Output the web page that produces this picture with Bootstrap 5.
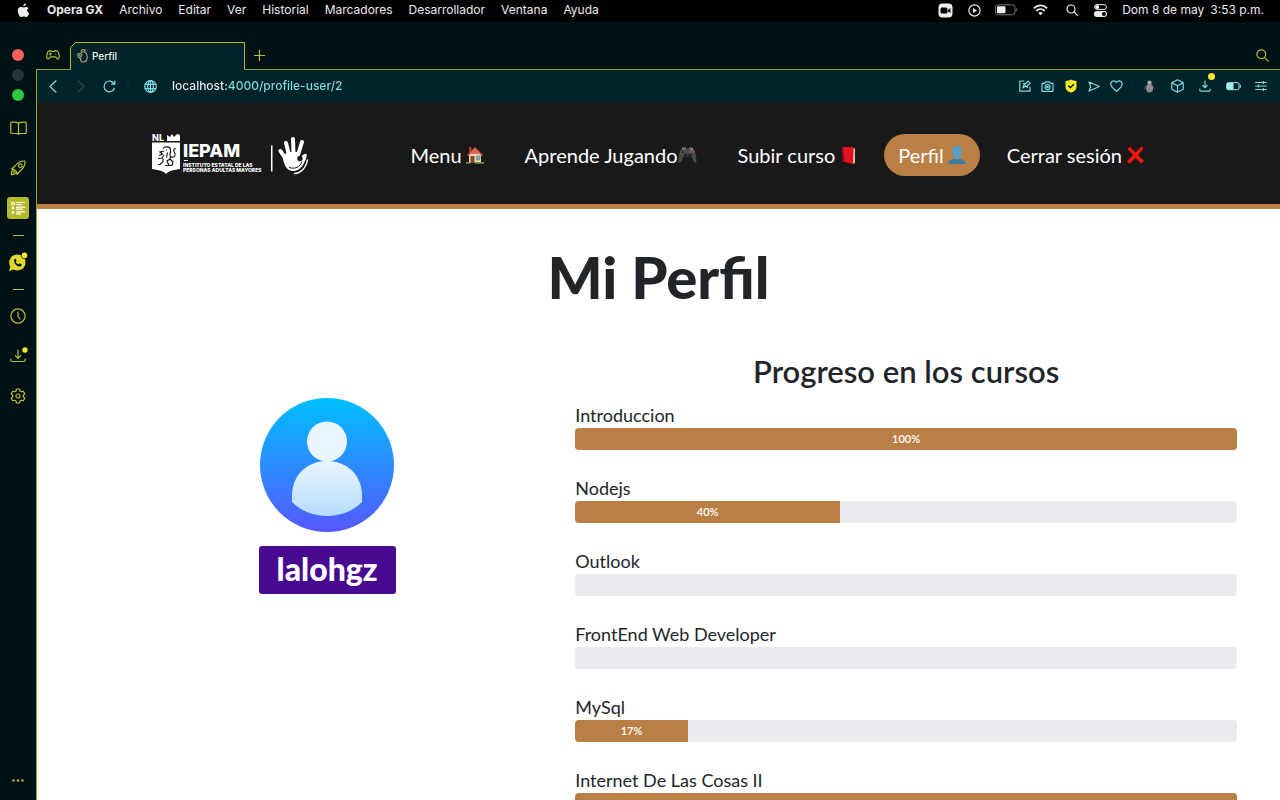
<!DOCTYPE html>
<html lang="es">
<head>
<meta charset="utf-8">
<meta name="viewport" content="width=device-width, initial-scale=1">
<title>Perfil</title>
<link href="https://cdn.jsdelivr.net/npm/bootstrap@5.3.0/dist/css/bootstrap.min.css" rel="stylesheet">
<style>
:root{--lime:#b9bf2f;--cyan:#7fdde2;--brand:#b97f45;--deep:#011114;--bar:#01232a}
body{font-family:Inter,"Liberation Sans",sans-serif;background:var(--deep)}
svg{display:block;flex:none}
button{background:none;border:0;padding:0;color:inherit;display:flex;align-items:center;justify-content:center}
.ico{fill:none;stroke:currentColor;stroke-width:1.2;stroke-linecap:round;stroke-linejoin:round}
.sysbar{background:#000;color:#ececec;height:22px;font-size:12px;line-height:20px;font-weight:500;padding:0 16px 2px 17px}
.sysbar nav{gap:16px;margin-left:17px}
.sysbar button{line-height:20px}
.sys-tools button{width:29px}
.sys-tools .wide{width:34px}
.clock{font-weight:400;gap:6px;padding-left:7px}
.rail{width:36px;color:var(--lime);padding-top:27px}
.lights{gap:8px;margin-bottom:7px}
.lights button{width:12px;height:12px;border-radius:50%}
.slot{height:40px;width:36px}
.slot-rule{height:14px}
.slot-rule i{width:11px;height:1px;background:var(--lime)}
.slot-on span{width:22px;height:22px;border-radius:3px;background:#b5b92c;color:#fff;display:flex;align-items:center;justify-content:center}
.tabstrip{height:48px;color:var(--lime)}
.edge{border-bottom:1px solid #98a02c}
.home-slot{width:34px;height:29px}
.page-tab{width:175px;height:28px;color:#f2f2f2;font-size:10px;font-weight:500;padding-left:7px;gap:4px}
.view{border-left:1px solid #98a02c}
.toolbar{height:32px;background:var(--bar);color:var(--cyan);padding:0 5px 0 2px}
.w28{width:28px}.w23{width:23px}.w34{width:34px}
.sep{width:10px;color:#1d4a50}.sep-s{width:7px}
.url{font-size:12px;line-height:20px;font-weight:500;border:0;padding:0 0 0 5px;outline:0;color:transparent;background:linear-gradient(90deg,#f4f4f4 60px,#83dfe3 60px);-webkit-background-clip:text;background-clip:text;-webkit-text-fill-color:transparent}
.dot{width:7px;height:7px;border-radius:50%;background:#f3ea2b;position:absolute}
.site{background:#fff;color:#212529;font-family:Lato,"Open Sans",sans-serif;overflow:hidden auto;scrollbar-width:none}
.site::-webkit-scrollbar{display:none}
.site-head{background:#191919;border-bottom:5px solid var(--brand)}
.site-inner{max-width:1013px;height:102px;padding:3px 6px 0 0}
.site-nav{gap:13px}
.site-nav a{color:#fff;font-size:20px;line-height:26px;padding:8px 14px;border-radius:21px;gap:4px;white-space:nowrap}
.site-nav a.on{background:var(--brand)}
.title{font-size:58px;line-height:70px;font-weight:900;margin:33px 0 0}
.panel{grid-template-columns:3fr 4fr;padding:40px 43px 0 42px}
.who{padding-top:46px}
.who svg{width:134px;height:134px}
.tag{background:#470a91;color:#fff;font-size:32px;line-height:34px;font-weight:900;padding:6px 18px 8px;border-radius:3px;margin-top:14px}
.sub-title{font-size:31px;line-height:38px;font-weight:600;margin:0 0 12px}
.course{margin-bottom:25px}
.course-name{font-size:18px;line-height:26px}
.course .progress{height:22px;border-radius:4px;background:#e9ebee;--bs-progress-bar-bg:#b97f45}
.course .progress-bar{font-size:11px;font-weight:600;line-height:22px}
</style>
</head>
<body class="vh-100 d-flex flex-column overflow-hidden">

<header class="sysbar d-flex align-items-center flex-shrink-0">
  <button aria-label="Apple"><svg width="13" height="15" viewBox="0 0 13 15" fill="#eee"><path d="M9 .3c.1 1.600-1.200 3-2.700 3C6.100 1.800 7.500.4 9 .3zM11.600 5.200c-2.200 1.400-1.800 4.200.6 5.200-.5 1.500-1.700 3.600-3 3.600-1 0-1.300-.6-2.500-.6s-1.600.6-2.500.6C2.500 14-.1 8.700 1.100 6c.8-1.800 2.400-2.300 3.700-1.900.8.200 1.300.5 1.900.5.600 0 1.200-.4 2.100-.6 1.100-.2 2.200.2 2.800 1.200z"/></svg></button>
  <nav class="d-flex flex-grow-1">
    <button class="fw-bold">Opera GX</button><button>Archivo</button><button>Editar</button><button>Ver</button><button>Historial</button><button>Marcadores</button><button>Desarrollador</button><button>Ventana</button><button>Ayuda</button>
  </nav>
  <div class="sys-tools d-flex align-items-center">
    <button aria-label="Zoom"><svg width="15" height="15" viewBox="0 0 15 15"><rect x=".5" y=".5" width="14" height="14" rx="4" fill="#eee"/><rect x="2.500" y="4.500" width="7" height="6" rx="1.500" fill="#000"/><path d="M10 7l2.500-2v5L10 8.500z" fill="#000"/></svg></button>
    <button aria-label="Reproducir"><svg class="ico" width="13" height="13" viewBox="0 0 13 13"><circle cx="6.500" cy="6.500" r="5.600"/><path d="M5 4l4 2.500L5 9z" fill="currentColor" stroke="none"/></svg></button>
    <button class="wide" aria-label="Batería"><svg width="23" height="12" viewBox="0 0 23 12"><rect x=".5" y=".8" width="19.500" height="10" rx="2.800" fill="none" stroke="#777"/><rect x="2" y="2.300" width="8.500" height="7" rx="1" fill="#eee"/><path d="M21.300 4v3.600c1.400-.6 1.400-3 0-3.600z" fill="#777"/></svg></button>
    <button class="wide" aria-label="Wi-Fi"><svg width="15" height="12" viewBox="0 0 15 12" fill="none" stroke="#eee" stroke-width="1.700"><path d="M.8 4.300c3.800-3.800 9.600-3.800 13.400 0M3.200 6.800c2.400-2.400 6.200-2.400 8.600 0"/><path d="M5.300 8.900c1.300-1.200 3.100-1.200 4.400 0L7.500 11.300z" fill="#eee" stroke="none"/></svg></button>
    <button aria-label="Buscar"><svg class="ico" width="12" height="12" viewBox="0 0 12 12" stroke-width="1.400"><circle cx="5" cy="5" r="4"/><path d="M8 8l3.400 3.400"/></svg></button>
    <button aria-label="Centro de control"><svg width="13" height="13" viewBox="0 0 13 13"><rect x=".6" y=".6" width="11.800" height="4.800" rx="2.400" fill="none" stroke="#eee"/><circle cx="3.200" cy="3" r="2" fill="#eee"/><rect y="7" width="13" height="6" rx="3" fill="#eee"/><circle cx="9.900" cy="10" r="2" fill="#000"/></svg></button>
    <div class="clock d-flex"><span>Dom 8 de may</span><span>3:53 p.m.</span></div>
  </div>
</header>

<div class="d-flex flex-grow-1 overflow-hidden">
  <aside class="rail d-flex flex-column align-items-center flex-shrink-0">
    <div class="lights d-flex flex-column">
      <button style="background:#f9605a" aria-label="Cerrar"></button><button style="background:#23343a" aria-label="Minimizar"></button><button style="background:#2bc840" aria-label="Ampliar"></button>
    </div>
    <button class="slot" aria-label="Lectura"><svg class="ico" width="17" height="14" viewBox="0 0 17 14"><path d="M8.500 2C7 .9 5 1 1.500 1.100q-.7 0-.7.700v10q0 .7.700.7h5.500l1.500.8 1.500-.8h5.500q.7 0 .7-.7v-10q0-.7-.7-.7C12 1 10 .9 8.500 2zM8.500 2v11"/></svg></button>
    <button class="slot" aria-label="Lanzador"><svg class="ico" width="16" height="16" viewBox="0 0 16 16"><path d="M15 1c-3.500-.2-7 1-10 5l-3.500 3 2.500.3L6.700 12l.3 2.500 3-3.500c4-3 5.200-6.500 5-10zM4 9.300C1.800 10.500 1.200 12.500 1.300 14.700c2.200.1 4.200-.5 5.400-2.700M3.500 12.500l1-1"/><circle cx="10.300" cy="5.700" r="1.800"/></svg></button>
    <button class="slot slot-on" aria-label="Noticias"><span><svg class="ico" width="16" height="16" viewBox="0 0 16 16"><circle cx="3" cy="3.500" r="1.500"/><circle cx="3" cy="8" r=".8"/><circle cx="3" cy="12.500" r=".8"/><path d="M6.500 2.500h8M6.500 4.500h5M6.500 7.200h8M6.500 9.200h6M6.500 11.800h8M6.500 13.800h4"/></svg></span></button>
    <div class="slot-rule d-flex align-items-center"><i></i></div>
    <button class="slot" aria-label="WhatsApp"><svg width="20" height="20" viewBox="0 0 20 20"><path d="M9.300 2.500a8 8 0 1 1-3.700 15L1 19l1.300-4.500A8 8 0 0 1 9.300 2.500z" fill="#dfd92c"/><path d="M6.300 7.200c.6-.8 1.200-.7 1.600 0l.6 1.400-.8 1.100c.7 1.400 1.500 2.100 2.800 2.700l1-1.100 1.900 1c.4.300.1 1.700-.9 2.100-3.500.9-7.500-4.100-6.200-7.200z" fill="#011114"/><circle cx="16.500" cy="3.400" r="3.400" fill="#011114"/><circle cx="16.500" cy="3.400" r="2.800" fill="#f3ea2b"/></svg></button>
    <div class="slot-rule d-flex align-items-center"><i></i></div>
    <button class="slot" aria-label="Historial"><svg class="ico" width="16" height="16" viewBox="0 0 16 16"><circle cx="8" cy="8" r="7.100"/><path d="M8 4v4.500l2 2.500"/></svg></button>
    <button class="slot" aria-label="Descargas"><svg class="ico" width="20" height="18" viewBox="0 0 20 18"><path d="M10 3v8M7.300 8.600L10 11.300l2.700-2.700M2.800 12v1.300q0 1.200 1.200 1.200h12q1.200 0 1.200-1.200V12"/><circle cx="17" cy="3" r="2.700" fill="#f3ea2b" stroke="none"/></svg></button>
    <button class="slot" aria-label="Ajustes"><svg class="ico" width="16" height="16" viewBox="0 0 16 16"><circle cx="8" cy="8" r="2"/><path d="M6.500 1h3l.5 2 1.300.8 2-.6 1.500 2.600L13.300 7.200v1.600l1.500 1.400-1.500 2.600-2-.6-1.300.8-.5 2h-3l-.5-2-1.300-.8-2 .6-1.500-2.600 1.500-1.400V7.200L1.200 5.800l1.500-2.600 2 .6L6 3z"/></svg></button>
    <button class="slot mt-auto" aria-label="Más"><svg width="12" height="3" viewBox="0 0 12 3" fill="currentColor"><circle cx="1.500" cy="1.500" r="1.200"/><circle cx="6" cy="1.500" r="1.200"/><circle cx="10.500" cy="1.500" r="1.200"/></svg></button>
  </aside>

  <div class="d-flex flex-column flex-grow-1 overflow-hidden">
    <div class="tabstrip d-flex align-items-end flex-shrink-0">
      <button class="home-slot edge" aria-label="GX Corner"><svg class="ico" width="14" height="10" viewBox="0 0 14 10"><path d="M3 .8h2l.8.7h2.400L9 .8h2c1.500.5 2.400 4 2.200 6.700-.3 1.900-1.700 1.900-2.700.4L9.500 6.800h-5L3.500 7.900C2.500 9.400 1.100 9.400.8 7.500.600 4.800 1.500 1.300 3 .8z"/><path d="M4.300 3v2M3.300 4h2M9.700 4h.1" /></svg></button>
      <div class="page-tab position-relative d-flex align-items-center">
        <svg class="position-absolute top-0 start-0" width="175" height="28" viewBox="0 0 175 28"><path d="M.5 28V5.500l5-5h169V28z" fill="#01232a"/><path d="M0 27.500h.5V5.500l5-5h169v27h.5" fill="none" stroke="#b5ba2c"/></svg>
        <svg class="ico position-relative" width="11" height="14" viewBox="0 0 11 14" style="color:#b29a76"><path d="M4 2.500l1-1.700h3l-.5 1.900M4.500 3.500c3.500-1.500 5.700.7 5.700 4.500 0 3.300-1.700 5-3.700 5-2.700 0-3.300-2-2.700-4M3.800 9C2 9.300.7 7.500.8 5c1.500-.8 3.500-.5 4 1 0 1.500-1.500 2-2.200.4"/></svg>
        <span class="position-relative">Perfil</span>
      </div>
      <div class="edge d-flex flex-grow-1 justify-content-between home-slot">
        <button class="w28" aria-label="Nueva pestaña"><svg class="ico" width="11" height="11" viewBox="0 0 11 11"><path d="M5.500.5v10M.5 5.500h10"/></svg></button>
        <button class="w28 me-1" aria-label="Buscar pestañas"><svg class="ico" width="13" height="13" viewBox="0 0 13 13"><circle cx="5.300" cy="5.300" r="4.400"/><path d="M8.600 8.600l3.600 3.600"/></svg></button>
      </div>
    </div>

    <div class="view d-flex flex-column flex-grow-1 overflow-hidden">
      <div class="toolbar d-flex align-items-center flex-shrink-0">
        <button class="w28" aria-label="Atrás"><svg class="ico" width="8" height="13" viewBox="0 0 8 13"><path d="M7 .8L1 6.500l6 5.700"/></svg></button>
        <button class="w28" aria-label="Adelante" style="color:#1d4a50"><svg class="ico" width="8" height="13" viewBox="0 0 8 13"><path d="M1 .8l6 5.700-6 5.700"/></svg></button>
        <button class="w28" aria-label="Recargar"><svg class="ico" width="13" height="13" viewBox="0 0 13 13"><path d="M11.500 8.300A5.400 5.400 0 1 1 11 3.500M11.800 1v3.200H8.600"/></svg></button>
        <svg class="sep" height="12" viewBox="0 0 10 12" fill="currentColor"><circle cx="5" cy="2" r=".8"/><circle cx="5" cy="6" r=".8"/><circle cx="5" cy="10" r=".8"/></svg>
        <button class="w34" aria-label="Información del sitio"><svg class="ico" width="13" height="13" viewBox="0 0 13 13"><circle cx="6.500" cy="6.500" r="5.800"/><ellipse cx="6.500" cy="6.500" rx="2.800" ry="5.800"/><path d="M6.500.7v11.600M1.300 4.300h10.400M1.300 8.700h10.400"/></svg></button>
        <input class="url flex-grow-1" type="text" aria-label="Dirección" value="localhost:4000/profile-user/2">
        <button class="w23" aria-label="Editar página"><svg class="ico" width="12" height="12" viewBox="0 0 12 12"><path d="M5 1H.8v10.200H11V7M4 8l.5-2.500M4.300 7.700L6.200 6M4.500 3.700l3.800 3.800.3-2 2.500-2.400-2-2L6.700 3.500z"/></svg></button>
        <button class="w23" aria-label="Captura"><svg class="ico" width="13" height="11" viewBox="0 0 13 11"><path d="M1 2.300h2.500L4.500.8h4l1 1.500H12v8H1z"/><circle cx="6.500" cy="6" r="2.500"/><circle cx="6.500" cy="6" r=".7"/></svg></button>
        <button class="w23" aria-label="Protección"><svg width="12" height="14" viewBox="0 0 12 14"><path d="M6 .5c2 1 3.500 1.300 5.500 1.500v6c0 3-2.500 4.500-5.500 5.700C3 12.500.5 11 .5 8V2C2.500 1.800 4 1.500 6 .5z" fill="#f3ea2b"/><path d="M3.300 6.500l2 2.200 3.500-3.500" fill="none" stroke="#01232a" stroke-width="1.500"/></svg></button>
        <button class="w23" aria-label="Enviar"><svg class="ico" width="12" height="11" viewBox="0 0 12 11"><path d="M1 1l10.300 4.500L1 10l1.700-4.500z"/></svg></button>
        <button class="w23" aria-label="Favorito"><svg class="ico" width="13" height="12" viewBox="0 0 13 12"><path d="M6.500 11.200C3.500 9 .8 7 .8 4 .8.800 4.800-.1 6.500 2.500 8.200-.1 12.200.8 12.200 4c0 3-2.700 5-5.700 7.200z"/></svg></button>
        <svg class="sep sep-s" height="12" viewBox="0 0 10 12" fill="currentColor"><circle cx="5" cy="2" r=".8"/><circle cx="5" cy="6" r=".8"/><circle cx="5" cy="10" r=".8"/></svg>
        <button class="w28" aria-label="Extensión"><svg width="11" height="13" viewBox="0 0 11 13"><circle cx="5.500" cy="2.600" r="2.200" fill="#aaa"/><ellipse cx="5.500" cy="8.300" rx="3.500" ry="4.200" fill="#8d8d8d"/><path d="M1.500 6L.5 9.500M9.500 6l1 3.500" stroke="#555"/></svg></button>
        <button class="w28" aria-label="Extensiones"><svg class="ico" width="13" height="14" viewBox="0 0 13 14"><path d="M6.500.8l5.700 3v6.400l-5.700 3-5.700-3V3.800zM.8 3.800l5.700 3 5.700-3M6.500 6.800v6.400"/></svg></button>
        <button class="w28 position-relative" aria-label="Descargas"><svg class="ico" width="12" height="12" viewBox="0 0 12 12"><path d="M6 1v6.500M3.800 5.500L6 7.700l2.200-2.200M.8 9v1q0 1.200 1 1.200h8.400q1 0 1-1.200V9"/></svg><i class="dot bottom-100 end-0 me-1"></i></button>
        <button class="w28" aria-label="Ahorro de batería"><svg width="15" height="9" viewBox="0 0 15 9"><rect x=".7" y=".7" width="12.300" height="7" rx="1.500" fill="none" stroke="#a1eef1"/><rect x="1" y="1" width="6.500" height="6.500" fill="#a1eef1"/><path d="M14.300 2.800v3" stroke="#a1eef1"/></svg></button>
        <button class="w28" aria-label="Configuración rápida"><svg class="ico" width="12" height="10" viewBox="0 0 12 10"><path d="M.7 1.500h10.600M.7 5h10.600M.7 8.500h10.600M8.500.5v2M3.500 4v2M8.500 7.500v2"/></svg></button>
      </div>

      <div class="site flex-grow-1">
        <header class="site-head">
          <div class="site-inner mx-auto d-flex align-items-center justify-content-between">
            <a href="#" aria-label="IEPAM"><svg width="160" height="44" viewBox="0 0 160 44" fill="#fff" font-family="Inter" font-weight="800">
              <text x="0" y="8" font-size="9">NL</text>
              <path d="M15 8V2l3 2 2-3 2 3 3-3 3 1v6zM0 9.500h28v26.500c-5 .8-11 1.500-14 5-3-3.500-9-4.200-14-5z"/>
              <g fill="none" stroke="#191919" stroke-width="1.200"><path d="M11 15.500c2-2.500 7-2 7.500 1s-.5 3-.5 4.500c0 2 1 3 0 5l-3 2 2 4.500h-4M12 18l-4 1 2.500 2-3.500 1.500M12 22l-2 3-4 .5M11 25.500v3l-3 3H6M18 26l3 3-1 3.500h-3M19 24c4 1 5-2 3.500-4.500S22 15 24 16M14 17h1M15.500 19.500l-1 5"/></g>
              <text x="31" y="24" font-size="18">IEPAM</text><path d="M32 27h4v1h-4z"/>
              <text x="31" y="34" font-size="5">INSTITUTO ESTATAL DE LAS</text><text x="31" y="39" font-size="5">PERSONAS ADULTAS MAYORES</text>
              <path d="M119 12.500h1.500v26H119z"/>
              <g fill="none" stroke="#fff" stroke-width="4" stroke-linecap="round"><path d="M133 25l-4.500-7M137 22l-3-12M141.500 21L141 6M146 22l4-13"/></g>
              <path d="M131 24l4-5 12 0 1 5c2 0 4-4 6-3s-.5 6-2.500 10-6.500 7.500-11.500 7S131 31 131 24z"/><circle cx="148" cy="25.500" r="2.700" fill="#191919"/><path d="M137 34.500c6 2 11-.5 13-6" fill="none" stroke="#191919"/><path d="M142 40.500c6 .5 12-5 13.500-14" fill="none" stroke="#fff" stroke-width="1.500"/>
            </svg></a>
            <nav class="site-nav d-flex">
              <a href="#" class="d-flex align-items-center text-decoration-none">Menu <svg width="18" height="18" viewBox="0 0 18 18"><path d="M3 8h12v9H3z" fill="#ecdcb5"/><path d="M3 1h2.500v5H3z" fill="#a3402d"/><path d="M9 1l8 8-1.300 1L9 4 2.300 10 1 9z" fill="#d9483b"/><path d="M9 2.500l6 5.500H3z" fill="#dd6a58"/><path d="M4.500 10h4v7h-4z" fill="#87452d"/><path d="M10.300 10h3.700v4h-3.700z" fill="#68aeca" stroke="#9c7650" stroke-width=".6"/><path d="M0 16h4v1.700H0zM9 16h9v1.700H9z" fill="#6d9440"/></svg></a>
              <a href="#" class="d-flex align-items-center text-decoration-none gap-0">Aprende Jugando<svg width="19" height="18" viewBox="0 0 19 18"><path d="M4 2.500h11c2 0 4 11.500 3.300 13.500-.8 2-2.300.5-4.800-5h-8C3 16.500 1.500 18 .7 16 0 14 2 2.500 4 2.500z" fill="#4b4b4b"/><path d="M4 1.500h4v2H4zM11 1.500h4v2h-4z" fill="#777"/><circle cx="5" cy="6" r="2" fill="#222" stroke="#777" stroke-width=".7"/><circle cx="7.500" cy="9.500" r="1.900" fill="#252525"/><circle cx="12" cy="9.500" r="1.900" fill="#252525"/><circle cx="14" cy="4" r="1" fill="#e96834"/><circle cx="15.700" cy="5.700" r="1" fill="#c94b39"/><circle cx="12.500" cy="5.700" r="1" fill="#687887"/></svg></a>
              <a href="#" class="d-flex align-items-center text-decoration-none">Subir curso <svg width="18" height="18" viewBox="0 0 18 18"><path d="M3 1l11-.3 2 1.800v14L13 18z" fill="#c5101c"/><path d="M14 2.500l2 .2v14L14 18z" fill="#d8c5bb"/><path d="M3 1l11.500 1.500-.5 15.500L4 15.500z" fill="#e51222"/><path d="M3 1l1.500.3L5.500 16 4 15.500z" fill="#a50b15"/></svg></a>
              <a href="#" class="on d-flex align-items-center text-decoration-none" aria-current="page">Perfil <svg width="18" height="18" viewBox="0 0 18 18"><path d="M9 0c3 0 5 2 5 5.500 0 2-.8 4-2.500 5v2.300c4 .8 6.300 2.200 6.300 5.200H.2c0-3 2.300-4.400 6.300-5.200v-2.300C4.800 9.500 4 7.500 4 5.500 4 2 6 0 9 0z" fill="#5b9fc4"/><path d="M.2 18c0-3 2.300-4.400 6.300-5.200 1.500 1 3.500 1 5 0 4 .8 6.300 2.200 6.300 5.200z" fill="#3f7da3"/></svg></a>
              <a href="#" class="d-flex align-items-center text-decoration-none">Cerrar sesión <svg width="19" height="18" viewBox="0 0 19 18"><path d="M1.500 3L4 .8l5.500 5.700L15.500.5l2 2L12 9l6 6-2.500 2.500L9.500 12l-6 5.700L1 15.300 7 9z" fill="#f5130b"/></svg></a>
            </nav>
          </div>
        </header>

        <main>
          <h1 class="title text-center">Mi Perfil</h1>
          <div class="panel d-grid">
            <section class="who d-flex flex-column align-items-center">
              <svg viewBox="0 0 134 134" role="img" aria-label="Avatar"><defs><linearGradient id="sky" x2="0" y2="1"><stop stop-color="#00bfff"/><stop offset="1" stop-color="#5558ff"/></linearGradient><linearGradient id="torso" x2="0" y2="1"><stop stop-color="#ebf5ff"/><stop offset="1" stop-color="#b5dcff"/></linearGradient></defs><circle cx="67" cy="67" r="67" fill="url(#sky)"/><circle cx="67" cy="43.500" r="20" fill="#eaf5ff"/><path d="M32 98c0-22 16-35 35-35s35 13 35 35v6c-18 18.500-52 18.500-70 0z" fill="url(#torso)"/></svg>
              <div class="tag">lalohgz</div>
            </section>
            <section>
              <h2 class="sub-title text-center">Progreso en los cursos</h2>
              <div class="course"><div class="course-name" id="c1">Introduccion</div><div class="progress" role="progressbar" aria-labelledby="c1" aria-valuenow="100"><div class="progress-bar" style="width:100%">100%</div></div></div>
              <div class="course"><div class="course-name" id="c2">Nodejs</div><div class="progress" role="progressbar" aria-labelledby="c2" aria-valuenow="40"><div class="progress-bar" style="width:40%">40%</div></div></div>
              <div class="course"><div class="course-name" id="c3">Outlook</div><div class="progress" role="progressbar" aria-labelledby="c3" aria-valuenow="0"></div></div>
              <div class="course"><div class="course-name" id="c4">FrontEnd Web Developer</div><div class="progress" role="progressbar" aria-labelledby="c4" aria-valuenow="0"></div></div>
              <div class="course"><div class="course-name" id="c5">MySql</div><div class="progress" role="progressbar" aria-labelledby="c5" aria-valuenow="17"><div class="progress-bar" style="width:17%">17%</div></div></div>
              <div class="course"><div class="course-name" id="c6">Internet De Las Cosas II</div><div class="progress" role="progressbar" aria-labelledby="c6" aria-valuenow="100"><div class="progress-bar" style="width:100%">100%</div></div></div>
            </section>
          </div>
        </main>
      </div>
    </div>
  </div>
</div>
<script src="https://cdn.jsdelivr.net/npm/bootstrap@5.3.0/dist/js/bootstrap.bundle.min.js"></script>
</body>
</html>
